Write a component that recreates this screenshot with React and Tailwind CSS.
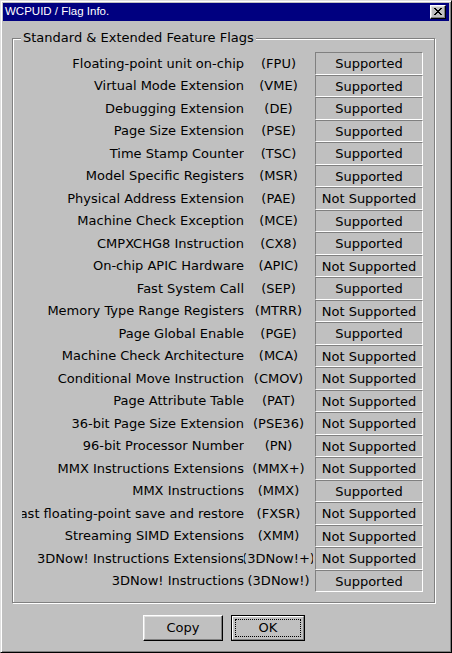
import React from "react";

const flags = [
  ["Floating-point unit on-chip", "FPU", true],
  ["Virtual Mode Extension", "VME", true],
  ["Debugging Extension", "DE", true],
  ["Page Size Extension", "PSE", true],
  ["Time Stamp Counter", "TSC", true],
  ["Model Specific Registers", "MSR", true],
  ["Physical Address Extension", "PAE", false],
  ["Machine Check Exception", "MCE", true],
  ["CMPXCHG8 Instruction", "CX8", true],
  ["On-chip APIC Hardware", "APIC", false],
  ["Fast System Call", "SEP", true],
  ["Memory Type Range Registers", "MTRR", false],
  ["Page Global Enable", "PGE", true],
  ["Machine Check Architecture", "MCA", false],
  ["Conditional Move Instruction", "CMOV", false],
  ["Page Attribute Table", "PAT", false],
  ["36-bit Page Size Extension", "PSE36", false],
  ["96-bit Processor Number", "PN", false],
  ["MMX Instructions Extensions", "MMX+", false],
  ["MMX Instructions", "MMX", true],
  ["Fast floating-point save and restore", "FXSR", false],
  ["Streaming SIMD Extensions", "XMM", false],
  ["3DNow! Instructions Extensions", "3DNow!+", false],
  ["3DNow! Instructions", "3DNow!", true],
];

const xCells = [
  [0, 0], [1, 0], [6, 0], [7, 0],
  [1, 1], [2, 1], [5, 1], [6, 1],
  [2, 2], [3, 2], [4, 2], [5, 2],
  [3, 3], [4, 3],
  [2, 4], [3, 4], [4, 4], [5, 4],
  [1, 5], [2, 5], [5, 5], [6, 5],
  [0, 6], [1, 6], [6, 6], [7, 6],
];

function CloseButton() {
  return (
    <div className="flex h-[14px] w-[16px] items-center justify-center border border-t-white border-l-white border-r-black border-b-black bg-[#c0c0c0] shadow-[inset_-1px_-1px_0_#808080,inset_1px_1px_0_#dfdfdf]">
      <svg width="8" height="7" viewBox="0 0 8 7" shapeRendering="crispEdges" className="mb-[1px]">
        {xCells.map(([x, y]) => (
          <rect key={`${x}-${y}`} x={x} y={y} width="1" height="1" fill="#000" />
        ))}
      </svg>
    </div>
  );
}

function FlagRow({ name, code, supported, index }) {
  const height = index % 2 === 0 ? "h-[23px]" : "h-[22px]";
  return (
    <div className={`flex ${height} items-center`}>
      <div className="flex w-[222px] justify-end overflow-hidden whitespace-nowrap">
        <span>{name}</span>
      </div>
      <div className="flex w-[69px] justify-center overflow-hidden whitespace-nowrap">
        <span>({code})</span>
      </div>
      <div className={`ml-[2px] flex ${height} w-[108px] items-center justify-center border border-t-[#808080] border-l-[#808080] border-r-white border-b-white pt-[1px]`}>
        {supported ? "Supported" : "Not Supported"}
      </div>
    </div>
  );
}

export default function App() {
  return (
    <div
      className="flex h-[653px] w-[452px] flex-col border border-t-[#dfdfdf] border-l-[#dfdfdf] border-r-black border-b-black bg-[#c0c0c0] p-[2px] text-[13px] text-black shadow-[inset_1px_1px_0_#fff,inset_-1px_-1px_0_#808080]"
      style={{ fontFamily: '"DejaVu Sans", sans-serif' }}
    >
      <div className="flex h-[18px] items-center justify-between bg-[#000080] pl-[2px] pr-[3px] text-white">
        <span className="text-[11.5px] leading-none" style={{ fontFamily: '"Liberation Sans", Arial, sans-serif' }}>
          WCPUID / Flag Info.
        </span>
        <CloseButton />
      </div>

      <div className="flex flex-col px-[9px] pt-[17px]">
        <div className="relative h-[565px] w-[423px] border border-[#808080] shadow-[1px_1px_0_#fff,inset_1px_1px_0_#fff]">
          <span className="absolute -top-[9px] left-[8px] bg-[#c0c0c0] px-[2px] leading-[16px]">
            Standard &amp; Extended Feature Flags
          </span>
          <div className="flex flex-col pl-[9px] pt-[13px]">
            {flags.map(([name, code, supported], i) => (
              <FlagRow key={code} name={name} code={code} supported={supported} index={i} />
            ))}
          </div>
        </div>

        <div className="flex gap-[8px] pl-[131px] pt-[12px]">
          <button className="flex h-[26px] w-[80px] items-center justify-center border border-t-white border-l-white border-r-black border-b-black bg-[#c0c0c0] shadow-[inset_-1px_-1px_0_#808080,inset_1px_1px_0_#dfdfdf]">
            Copy
          </button>
          <button className="flex h-[26px] w-[74px] border border-black bg-[#c0c0c0]">
            <div className="flex flex-1 border border-t-white border-l-white border-r-[#808080] border-b-[#808080] p-[2px]">
              <div className="flex flex-1 items-center justify-center border border-dotted border-black">OK</div>
            </div>
          </button>
        </div>
      </div>
    </div>
  );
}
